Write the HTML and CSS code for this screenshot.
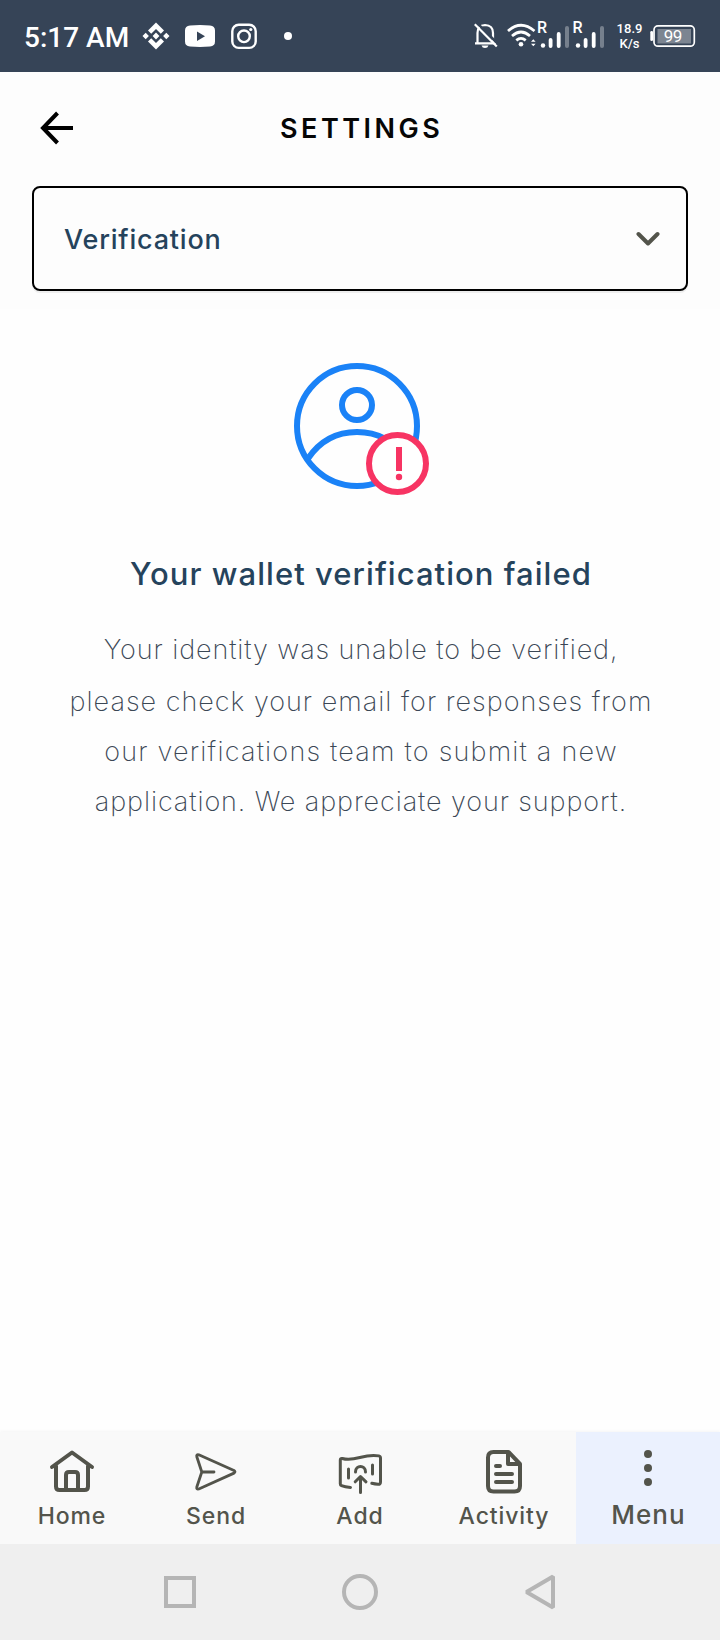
FILE: index.html
```html
<!DOCTYPE html>
<html lang="en">
<head>
    <meta charset="utf-8">
    <meta name="viewport" content="width=device-width, initial-scale=1.0">
    <title>Settings</title>
    <link rel="stylesheet" href="styles.css">
</head>
<body>
<div class="status-bar">
    <span class="time">5:17 AM</span>
    <svg class="notifications" width="160" height="72" viewBox="140 0 160 72" fill="#fff">
        <!-- binance -->
        <path d="M156 22.500l8 8-3.200 3.200-4.800-4.800-4.800 4.800-3.200-3.200zM156 49.500l8-8-3.200-3.200-4.800 4.800-4.800-4.800-3.200 3.200zM145.700 32.800l3.200 3.200-3.200 3.200-3.200-3.200zM166.300 32.800l3.200 3.200-3.200 3.200-3.200-3.200zM156 32.600l3.400 3.400-3.400 3.400-3.400-3.400z"/>
        <!-- youtube -->
        <path fill-rule="evenodd" d="M190 25.500q10-.8 20 0q5 .3 5 5v11q0 4.700-5 5q-10 .8-20 0q-5-.3-5-5v-11q0-4.700 5-5zM197 31.500v9.400l8-4.700z"/>
        <!-- instagram -->
        <g fill="none" stroke="#fff" stroke-width="2.400">
            <rect x="232.300" y="24.700" width="23.400" height="23.200" rx="6.500"/>
            <circle cx="244" cy="36.300" r="5.800"/>
        </g>
        <circle cx="250.800" cy="29.500" r="1.600"/>
        <circle cx="288" cy="36" r="4"/>
    </svg>
    <span class="spacer"></span>
    <svg width="138" height="72" viewBox="472 0 138 72" fill="none" stroke="#fff" stroke-width="2.200">
        <!-- muted bell -->
        <path d="M477.500 43V33q0-7.800 7.500-8q8 .2 8 8v10M475 43.300h21"/>
        <path d="M481.500 45.500h7q-.8 2.500-3.500 2.500t-3.500-2.500z" fill="#fff" stroke="none"/>
        <path d="M476.500 22.500l21.500 21.500" stroke="#364457" stroke-width="2.500"/>
        <path d="M474.800 24.200L496.800 46.500"/>
        <!-- wifi -->
        <g stroke-width="2.700">
            <path d="M508 31q13-11.500 26.500 0M512 36q9-8 18 0M516.300 40.400q4.700-4 9.400 0"/>
        </g>
        <g fill="#fff" stroke="none">
            <circle cx="521" cy="44.300" r="2.300"/>
            <path d="M531 41.800l2.300-2.500 2.300 2.500zM531 43.800l2.300 2.500 2.300-2.500z"/>
            <text class="roaming" x="537" y="32.500">R</text>
            <text class="roaming" x="572.500" y="32.500">R</text>
            <circle cx="543" cy="45.500" r="2.200"/>
            <rect x="548.700" y="38" width="3.800" height="10" rx="1.900"/>
            <rect x="556.800" y="32" width="3.800" height="16" rx="1.900"/>
            <rect x="565" y="26" width="4" height="22" rx="2" opacity=".32"/>
            <circle cx="578" cy="45.500" r="2.200"/>
            <rect x="583.700" y="38" width="3.800" height="10" rx="1.900"/>
            <rect x="591.800" y="32" width="3.800" height="16" rx="1.900"/>
            <rect x="600" y="26" width="4" height="22" rx="2" opacity=".32"/>
        </g>
    </svg>
    <span class="speed">18.9<br>K/s</span>
    <svg class="battery" width="47" height="24" viewBox="649 24 47 24">
        <rect x="650.300" y="31" width="2.700" height="10" rx="1.300" fill="#fff"/>
        <rect x="654" y="25.900" width="40.300" height="20.300" rx="4" fill="none" stroke="#fff" stroke-width="1.700"/>
        <rect x="657.500" y="29" width="33.500" height="14.500" fill="#fff" opacity=".35"/>
        <text x="672.800" y="42">99</text>
    </svg>
</div>

<div class="header">
    <div class="title-row">
        <svg class="back" width="34" height="34" viewBox="0 0 34 34">
            <path d="M17.500 2L3 17l14.500 15M3 17h30" fill="none" stroke="#000" stroke-width="4"/>
        </svg>
        <h1 class="title">SETTINGS</h1>
    </div>
    <div class="select">
        <span class="select-value">Verification</span>
        <svg width="24" height="16" viewBox="0 0 24 16">
            <path d="M2.500 3l9.500 9.500L21.500 3" fill="none" stroke="#53544b" stroke-width="4" stroke-linecap="round" stroke-linejoin="round"/>
        </svg>
    </div>
</div>

<div class="content">
    <svg class="user-failed" width="138" height="134" viewBox="292 362 138 134" fill="none" stroke-width="6">
        <g stroke="#1a82f7">
            <circle cx="357" cy="426" r="60"/>
            <circle cx="357" cy="405" r="15"/>
            <path d="M308 458.500Q326 432 357 432T406 458.500"/>
        </g>
        <circle cx="397.500" cy="463.500" r="28.500" fill="#fff" stroke="#f73463"/>
        <path d="M399 447v24" stroke="#f73463"/>
        <circle cx="399" cy="477" r="3.200" fill="#f73463"/>
    </svg>
    <h2 class="heading">Your wallet verification failed</h2>
    <p class="message">
        <span class="l1">Your identity was unable to be verified,</span>
        <span class="l2">please check your email for responses from</span>
        <span class="l3">our verifications team to submit a new</span>
        <span class="l4">application. We appreciate your support.</span>
    </p>
</div>

<div class="tabs">
    <div class="tab">
        <svg width="48" height="48" viewBox="48 1448 48 48">
            <path d="M52 1467l20-14.500L92 1467M56 1466v20.500q0 3.500 3.500 3.500h25q3.500 0 3.500-3.500V1466M66 1489v-14q0-3 3-3h6q3 0 3 3v14" stroke-width="4"/>
        </svg>
        <span class="label home">Home</span>
    </div>
    <div class="tab">
        <svg width="48" height="48" viewBox="192 1448 48 48">
            <path d="M198.800 1454.800L234 1470.500q2 1.300 0 2.600L198.800 1489q-2.600.6-2-2l5-15-5-15.200q-.6-2.600 2-2zM202 1472h12" stroke-width="2.800"/>
        </svg>
        <span class="label send">Send</span>
    </div>
    <div class="tab">
        <svg width="48" height="48" viewBox="336 1448 48 48">
            <path d="M350.500 1487.500q-5.500-.3-9-1.800-1.200-.5-1.200-2V1460q0-2 2-1.500c13 4 21-5.500 36.500-2.600q1.700.4 1.700 2.200V1482q0 2.500-2.500 2.300-3-.2-6.200-1M348.500 1469v9M372.500 1465v9M355.500 1472c0-7.200 10-7.200 10 0M360.500 1492.500V1477M355.200 1481.800l5.300-5.300 5.500 5.300" stroke-width="3"/>
        </svg>
        <span class="label add">Add</span>
    </div>
    <div class="tab">
        <svg width="48" height="48" viewBox="480 1448 48 48">
            <path d="M493.500 1452h15l11.500 12v22q0 5.500-5.500 5.500h-21q-5.500 0-5.500-5.500v-28.500q0-5.500 5.500-5.500zM508 1452v12h12M496 1466h4M496 1474h16M496 1482h16" stroke-width="4"/>
        </svg>
        <span class="label activity">Activity</span>
    </div>
    <div class="tab active">
        <svg width="48" height="48" viewBox="624 1448 48 48">
            <g class="dots">
                <circle cx="648" cy="1454" r="4"/>
                <circle cx="648" cy="1468" r="4"/>
                <circle cx="648" cy="1482" r="4"/>
            </g>
        </svg>
        <span class="label menu">Menu</span>
    </div>
</div>

<div class="system-nav">
    <svg width="40" height="40" viewBox="160 1572 40 40"><rect x="166" y="1578" width="28" height="28"/></svg>
    <svg width="40" height="40" viewBox="340 1572 40 40"><circle cx="360" cy="1592" r="16"/></svg>
    <svg width="40" height="40" viewBox="520 1572 40 40"><path d="M526.500 1592l26.500-15.500v31z" stroke-linejoin="bevel"/></svg>
</div>
</body>
</html>
```
FILE: styles.css
```css
* {
    box-sizing: border-box;
}

body {
    margin: 0;
    width: 720px;
    height: 1640px;
    display: flex;
    flex-direction: column;
    background: #fefefe;
    font-family: Inter, "Liberation Sans", sans-serif;
}

svg {
    display: block;
    flex: none;
}

.status-bar {
    height: 72px;
    flex: none;
    display: flex;
    align-items: center;
    padding: 0 24px;
    background: #364457;
    color: #fff;
    font-family: Roboto, sans-serif;
}

.time {
    width: 106px;
    padding-top: 2px;
    font-size: 28px;
    font-weight: 500;
    white-space: nowrap;
}

.notifications {
    margin-left: 10px;
}

.spacer {
    flex: 1;
}

.roaming {
    font-size: 16px;
    font-weight: 500;
}

.speed {
    width: 39px;
    font-size: 13px;
    line-height: 15px;
    font-weight: 500;
    text-align: center;
}

.battery text {
    fill: #fff;
    font-size: 17px;
    letter-spacing: -.5px;
    text-anchor: middle;
}

.header {
    height: 237px;
    flex: none;
    padding: 0 32px;
    background: #fdfdfd;
}

.title-row {
    height: 114px;
    display: flex;
    align-items: center;
    padding-left: 8px;
}

.back {
    margin-top: -2px;
}

.title {
    margin: -1px 0 0 206px;
    font-size: 27px;
    font-weight: 600;
    letter-spacing: 3.5px;
    color: #060606;
}

.select {
    height: 105px;
    display: flex;
    align-items: center;
    justify-content: space-between;
    padding: 0 26px 0 30px;
    border: 2px solid #000;
    border-radius: 8px;
    box-shadow: 0 2px 0 #eee;
}

.select-value {
    padding-top: 2px;
    font-size: 27px;
    font-weight: 500;
    letter-spacing: .8px;
    color: #25435c;
}

.content {
    flex: 1;
    padding-top: 53px;
    text-align: center;
}

.user-failed {
    margin-left: 292px;
}

.heading {
    margin: 58px 0 0;
    padding-left: 2px;
    font-size: 31px;
    line-height: 40px;
    font-weight: 500;
    letter-spacing: 1.05px;
    color: #25435c;
}

.message {
    margin: 31px 0 0;
    padding-left: 2px;
    font-size: 27px;
    line-height: 50px;
    font-weight: 250;
    color: #3b4755;
}

.message span {
    display: block;
    white-space: nowrap;
}

.l1 {
    margin-bottom: 2px;
    letter-spacing: .9px;
}

.l2 {
    letter-spacing: 1px;
}

.l3 {
    letter-spacing: 1.2px;
}

.l4 {
    letter-spacing: .9px;
}

.tabs {
    height: 112px;
    flex: none;
    display: flex;
    background: #f9f9f9;
    box-shadow: 0 -1px 3px rgba(0, 0, 0, .04);
}

.tab {
    flex: 1;
    display: flex;
    flex-direction: column;
    align-items: center;
    padding-top: 16px;
}

.tab svg {
    fill: none;
    stroke: #53544b;
    stroke-linecap: round;
    stroke-linejoin: round;
}

.tab .dots {
    fill: #53544b;
    stroke: none;
}

.active {
    background: #ebf1fe;
}

.label {
    margin-top: 6px;
    font-size: 23px;
    line-height: 28px;
    font-weight: 500;
    letter-spacing: .9px;
    color: #53544b;
}

.menu {
    margin-top: 5px;
    padding-left: 1px;
    font-size: 26px;
    letter-spacing: 1px;
}

.system-nav {
    height: 96px;
    flex: none;
    display: flex;
    align-items: center;
    justify-content: center;
    gap: 140px;
    background: #efefef;
}

.system-nav svg {
    fill: none;
    stroke: #b5b5b5;
    stroke-width: 4;
}
```
